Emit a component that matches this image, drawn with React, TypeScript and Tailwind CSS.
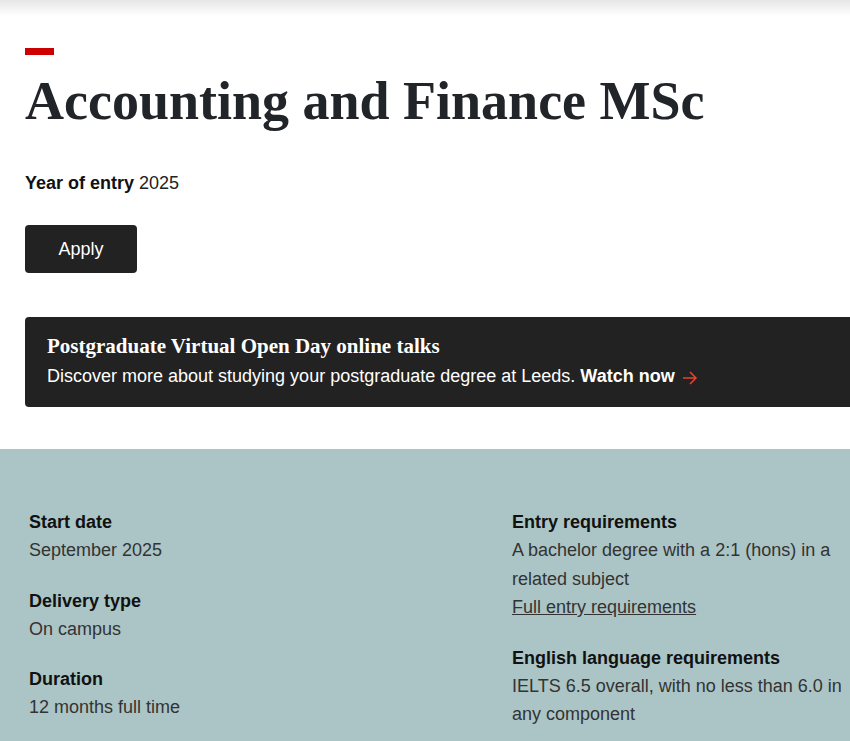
const serif = "font-['Liberation_Serif','Times_New_Roman',serif]";

function Detail({ label, children }: { label: string; children: React.ReactNode }) {
  return (
    <div>
      <h3 className="text-[18px] font-bold leading-[28px] text-[#111]">{label}</h3>
      <div className="text-[18px] leading-[28.5px] text-[#333]">{children}</div>
    </div>
  );
}

export default function App() {
  return (
    <div className="min-h-[741px] w-[850px] overflow-hidden bg-white font-['Liberation_Sans',Arial,sans-serif]">
      {/* header shadow */}
      <div className="h-[16px] bg-gradient-to-b from-[#e6e6e6] to-white" />

      <div className="px-[25px] pt-[32px]">
        <div className="h-[7px] w-[29px] bg-[#c00]" />
        <h1 className={`${serif} mt-[16px] whitespace-nowrap text-[54px] font-bold leading-[60px] text-[#212529]`}>
          Accounting and Finance MSc
        </h1>

        <p className="mt-[38px] text-[18px] leading-[28px] text-[#222]">
          <span className="font-bold text-[#111]">Year of entry</span> 2025
        </p>

        <button className="mt-[28px] flex h-[48px] w-[112px] items-center justify-center rounded-[4px] bg-[#222] text-[18px] text-white">
          Apply
        </button>

        <div className="mt-[44px] w-[900px] rounded-l-[4px] bg-[#222] px-[22px] pb-[17px] pt-[16px] text-white">
          <h2 className={`${serif} text-[21px] font-bold leading-[26px]`}>
            Postgraduate Virtual Open Day online talks
          </h2>
          <p className="mt-[3px] flex items-center text-[18px] leading-[28px]">
            Discover more about studying your postgraduate degree at Leeds.&nbsp;
            <span className="font-bold">Watch now</span>
            <svg className="ml-[7px] mt-[3px]" width="16" height="16" viewBox="0 0 16 16" fill="none" stroke="#e8432c" strokeWidth="1.5">
              <path d="M1 8h13M8 2l6 6-6 6" />
            </svg>
          </p>
        </div>
      </div>

      <div className="mt-[42px] grid grid-cols-[483px_340px] bg-[#abc5c6] px-[29px] pb-[40px] pt-[59px]">
        <div className="flex flex-col gap-[22px]">
          <Detail label="Start date">September 2025</Detail>
          <Detail label="Delivery type">On campus</Detail>
          <Detail label="Duration">12 months full time</Detail>
        </div>
        <div className="flex flex-col gap-[22px]">
          <Detail label="Entry requirements">
            A bachelor degree with a 2:1 (hons) in a related subject
            <br />
            <a href="#" className="underline">Full entry requirements</a>
          </Detail>
          <Detail label="English language requirements">
            IELTS 6.5 overall, with no less than 6.0 in any component
          </Detail>
        </div>
      </div>
    </div>
  );
}
